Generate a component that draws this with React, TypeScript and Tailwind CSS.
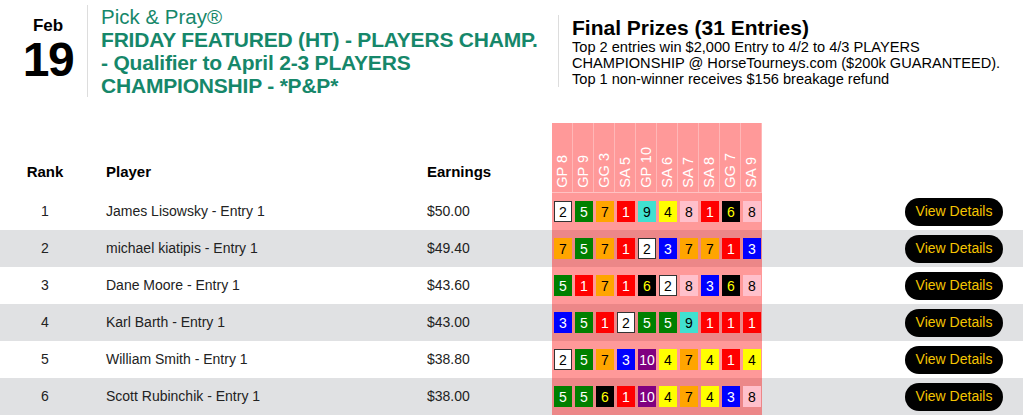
const races = ["GP 8", "GP 9", "GG 3", "SA 5", "GP 10", "SA 6", "SA 7", "SA 8", "GG 7", "SA 9"];

const rows = [
  { rank: 1, player: "James Lisowsky - Entry 1", earnings: "$50.00", picks: [2, 5, 7, 1, 9, 4, 8, 1, 6, 8] },
  { rank: 2, player: "michael kiatipis - Entry 1", earnings: "$49.40", picks: [7, 5, 7, 1, 2, 3, 7, 7, 1, 3] },
  { rank: 3, player: "Dane Moore - Entry 1", earnings: "$43.60", picks: [5, 1, 7, 1, 6, 2, 8, 3, 6, 8] },
  { rank: 4, player: "Karl Barth - Entry 1", earnings: "$43.00", picks: [3, 5, 1, 2, 5, 5, 9, 1, 1, 1] },
  { rank: 5, player: "William Smith - Entry 1", earnings: "$38.80", picks: [2, 5, 7, 3, 10, 4, 7, 4, 1, 4] },
  { rank: 6, player: "Scott Rubinchik - Entry 1", earnings: "$38.00", picks: [5, 5, 6, 1, 10, 4, 7, 4, 3, 8] },
];

// saddle cloth colours
const cloth: Record<number, string> = {
  1: "bg-[#ff0000] text-white",
  2: "bg-white text-black border-[1.5px] border-[#333]",
  3: "bg-[#0000ff] text-white",
  4: "bg-[#ffff00] text-black",
  5: "bg-[#008000] text-white",
  6: "bg-black text-[#ffff00]",
  7: "bg-[#ffa500] text-black",
  8: "bg-[#ffc0cb] text-black",
  9: "bg-[#40e0d0] text-black",
  10: "bg-[#800080] text-white",
};

function Pick({ n }: { n: number }) {
  return (
    <div className="w-[21px] flex justify-start">
      <div className={`ml-[2px] w-[18px] h-[21px] flex items-center justify-center text-[14px] leading-none ${cloth[n]}`}>
        {n}
      </div>
    </div>
  );
}

export default function App() {
  return (
    <div className="w-[1023px] h-[415px] overflow-hidden bg-white text-[#222] font-['Liberation_Sans',Arial,sans-serif]">
      <div className="flex pt-[5px] h-[123px]">
        <div className="w-[88px] h-[92px] border-r border-[#ddd] pl-[9px] flex flex-col items-center">
          <div className="mt-[11px] text-[17px] font-bold leading-[20px] text-black">Feb</div>
          <div className="text-[48px] font-bold leading-[48px] tracking-[-1.5px] text-black">19</div>
        </div>
        <div className="w-[460px] pl-[13px] text-[#16876a]">
          <div className="text-[20.5px] leading-[23px]">Pick &amp; Pray®</div>
          <div className="text-[21px] font-bold leading-[23px] tracking-[-0.2px]">
            FRIDAY FEATURED (HT) - PLAYERS CHAMP. - Qualifier to April 2-3 PLAYERS CHAMPIONSHIP - *P&amp;P*
          </div>
        </div>
        <div className="ml-[10px] mt-[10px] h-[72px] border-l border-[#ddd] pl-[13px] text-black">
          <div className="text-[21px] font-bold leading-[23px] mt-[1px]">Final Prizes (31 Entries)</div>
          <div className="text-[14.6px] leading-[16px] w-[440px]">
            Top 2 entries win $2,000 Entry to 4/2 to 4/3 PLAYERS CHAMPIONSHIP @ HorseTourneys.com ($200k GUARANTEED). Top 1 non-winner receives $156 breakage refund
          </div>
        </div>
      </div>

      <div className="flex h-[70px] text-[15px] font-bold text-black">
        <div className="w-[90px] text-center self-end pb-[10px]">Rank</div>
        <div className="w-[337px] pl-[16px] self-end pb-[10px]">Player</div>
        <div className="w-[125px] self-end pb-[10px]">Earnings</div>
        <div className="w-[210px] flex bg-[rgba(255,0,0,0.4)] border-b border-white/40">
          {races.map((r) => (
            <div key={r} className="w-[21px] border-r border-white/30 flex items-end justify-center pb-[4px]">
              <span className="[writing-mode:vertical-rl] rotate-180 text-white font-normal text-[14.5px] leading-[16px]">{r}</span>
            </div>
          ))}
        </div>
      </div>

      {rows.map((row, i) => (
        <div key={row.rank} className={`flex h-[37px] items-center text-[14px] ${i % 2 === 1 ? "bg-[#e0e1e3]" : "bg-white"}`}>
          <div className="w-[90px] text-center">{row.rank}</div>
          <div className="w-[337px] pl-[16px]">{row.player}</div>
          <div className="w-[125px]">{row.earnings}</div>
          <div className="w-[210px] h-full flex items-center bg-[rgba(255,0,0,0.4)]">
            {row.picks.map((n, j) => (
              <Pick key={j} n={n} />
            ))}
          </div>
          <div className="flex-1 flex justify-end pr-[20px]">
            <button className="w-[98px] h-[28px] rounded-full bg-black text-[#f5c400] text-[14px]">View Details</button>
          </div>
        </div>
      ))}
    </div>
  );
}
